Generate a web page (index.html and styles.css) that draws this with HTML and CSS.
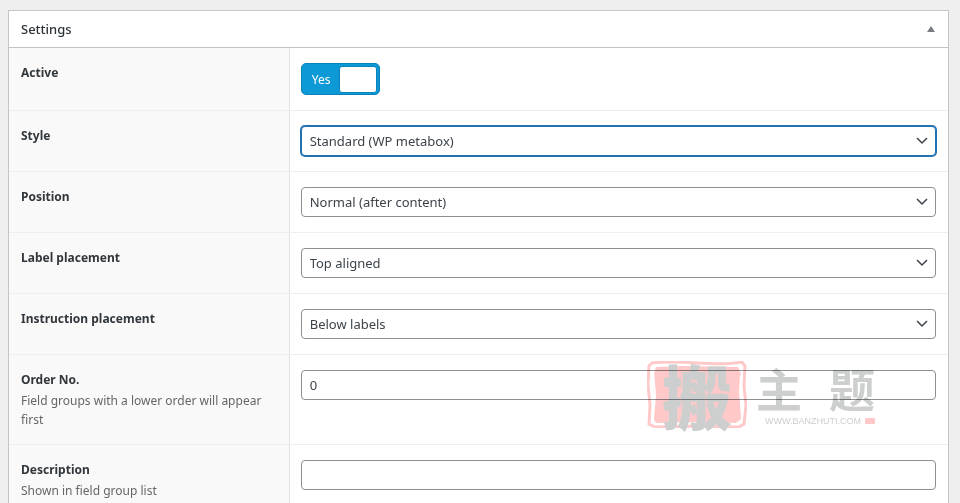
FILE: index.html
```html
<!DOCTYPE html>
<html lang="en">
<head>
<meta charset="utf-8">
<title>Settings</title>
<meta name="viewport" content="width=device-width, initial-scale=1">
<link rel="stylesheet" href="styles.css">
</head>
<body>
<main class="panel">
  <header class="panel-head">
    <h2>Settings</h2>
    <button class="collapse" type="button" aria-label="Collapse settings"><svg width="8" height="6" viewBox="0 0 8 6" aria-hidden="true"><path d="M4 0 8 6H0z" fill="currentColor"/></svg></button>
  </header>
  <form>
    <div class="row">
      <div class="label"><label for="active">Active</label></div>
      <div class="field">
        <label class="switch"><input type="checkbox" id="active" checked><span>Yes</span><i class="knob"></i></label>
      </div>
    </div>
    <div class="row">
      <div class="label"><label for="style">Style</label></div>
      <div class="field"><div class="select focused"><select id="style"><option>Standard (WP metabox)</option></select><svg viewBox="0 0 12 8" aria-hidden="true"><path d="m1 1 5 5 5-5"/></svg></div></div>
    </div>
    <div class="row">
      <div class="label"><label for="position">Position</label></div>
      <div class="field"><div class="select"><select id="position"><option>Normal (after content)</option></select><svg viewBox="0 0 12 8" aria-hidden="true"><path d="m1 1 5 5 5-5"/></svg></div></div>
    </div>
    <div class="row">
      <div class="label"><label for="label-placement">Label placement</label></div>
      <div class="field"><div class="select"><select id="label-placement"><option>Top aligned</option></select><svg viewBox="0 0 12 8" aria-hidden="true"><path d="m1 1 5 5 5-5"/></svg></div></div>
    </div>
    <div class="row">
      <div class="label"><label for="instruction">Instruction placement</label></div>
      <div class="field"><div class="select"><select id="instruction"><option>Below labels</option></select><svg viewBox="0 0 12 8" aria-hidden="true"><path d="m1 1 5 5 5-5"/></svg></div></div>
    </div>
    <div class="row">
      <div class="label"><label for="order">Order No.</label><p>Field groups with a lower order will appear first</p></div>
      <div class="field">
        <input class="text" id="order" type="text" value="0">
        <div class="watermark" lang="zh-CN">
          <div class="seal">
            <svg viewBox="0 0 100 67" aria-hidden="true">
              <path d="M5 2 Q20 0 50 2 T95 1 L98 5 97 25 99 44 97 63 92 66 50 65 8 66 2 63 3 44 1 24 2 5Z" fill="none" stroke="#ffc9c9" stroke-width="3"/>
              <path d="M9 6 35 5 91 6 94 13 93 37 94 58 89 62 51 61 9 62 6 57 7 37 6 15Z" fill="#ffc9c9"/>
              <path d="M6 10 8 34 6 58M94 14 93 31 95 52" fill="none" stroke="#ffffff" stroke-width="2"/>
            </svg>
            <span>搬</span>
          </div>
          <div class="brand">
            <div class="name"><span>主</span><span>题</span></div>
            <div class="site"><span>WWW.BANZHUTI.COM</span><i></i></div>
          </div>
        </div>
      </div>
    </div>
    <div class="row">
      <div class="label"><label for="description">Description</label><p>Shown in field group list</p></div>
      <div class="field"><input class="text" id="description" type="text"></div>
    </div>
  </form>
</main>
</body>
</html>
```

FILE: styles.css
```css
* { box-sizing: border-box; }

html { background: #efefef; }

body {
  margin: 0;
  padding: 10px 11px 0 8px;
  color: #3c434a;
  font: 13px/19px "Noto Sans", "Open Sans", sans-serif;
}

.panel {
  background: #fff;
  border: 1px solid #c3c4c7;
}

.panel-head {
  display: flex;
  align-items: center;
  justify-content: space-between;
  height: 37px;
  padding: 0 13px 0 12px;
  border-bottom: 1px solid #c3c4c7;
}

h2 {
  margin: 0;
  font-size: 13px;
  font-weight: 500;
  color: #2c3338;
}

.collapse {
  display: flex;
  padding: 0;
  border: 0;
  background: none;
  color: #787c82;
}

.row {
  display: flex;
  border-bottom: 1px solid #eee;
}

.label {
  flex: 0 0 calc(30% - 1px);
  padding: 15px 12px;
  background: #f9f9f9;
  border-right: 1px solid #e1e1e1;
}

.label label {
  display: block;
  line-height: 20px;
  font-weight: 700;
  font-size: 12px;
  color: #32373c;
}

.label p {
  margin: 1px 0 0;
  font-size: 12px;
  color: #666;
}

.field {
  position: relative;
  flex: 1;
  padding: 15px 12px 15px 11px;
}

.switch {
  display: inline-flex;
  vertical-align: top;
  align-items: center;
  justify-content: space-between;
  width: 79px;
  height: 32px;
  padding: 0 2px 0 10px;
  border: 1px solid #0a83bd;
  border-radius: 5px;
  background: #0d99d5;
  color: #fff;
  font-size: 12px;
}

.switch input {
  position: absolute;
  opacity: 0;
}

.knob {
  width: 38px;
  height: 27px;
  border: 1px solid #0a83bd;
  border-radius: 3px;
  background: #fff;
}

.select { position: relative; }

.select select,
.text {
  display: block;
  width: 100%;
  height: 30px;
  margin: 0;
  padding: 0 8px;
  border: 1px solid #8c8f94;
  border-radius: 4px;
  background: #fff;
  color: #3c434a;
  font: inherit;
  appearance: none;
}

.focused select {
  border-color: #2271b1;
  box-shadow: 0 0 0 1px #2271b1;
}

.select svg {
  position: absolute;
  top: 11px;
  right: 8px;
  width: 12px;
  height: 8px;
  fill: none;
  stroke: #3c434a;
  stroke-width: 1.5;
  pointer-events: none;
}

.watermark {
  position: absolute;
  top: 6px;
  right: 73px;
  display: flex;
  gap: 9px;
  color: #cccfce;
  font-family: "Noto Sans CJK SC", sans-serif;
  mix-blend-mode: multiply;
  pointer-events: none;
}

.seal {
  display: grid;
  place-items: center;
  width: 100px;
  height: 67px;
}

.seal svg,
.seal span { grid-area: 1 / 1; }

.seal svg {
  width: 100px;
  height: 67px;
}

.seal span {
  font-size: 70px;
  line-height: 64px;
  font-weight: 900;
}

.name {
  display: flex;
  justify-content: space-between;
  width: 119px;
  height: 53px;
  font-size: 46px;
  line-height: 53px;
  font-weight: 700;
}

.site {
  display: flex;
  align-items: center;
  justify-content: flex-end;
  gap: 4px;
  font: 9px/14px "Liberation Sans", sans-serif;
}

.site i {
  width: 10px;
  height: 6px;
  background: #ffc9c9;
}
```
